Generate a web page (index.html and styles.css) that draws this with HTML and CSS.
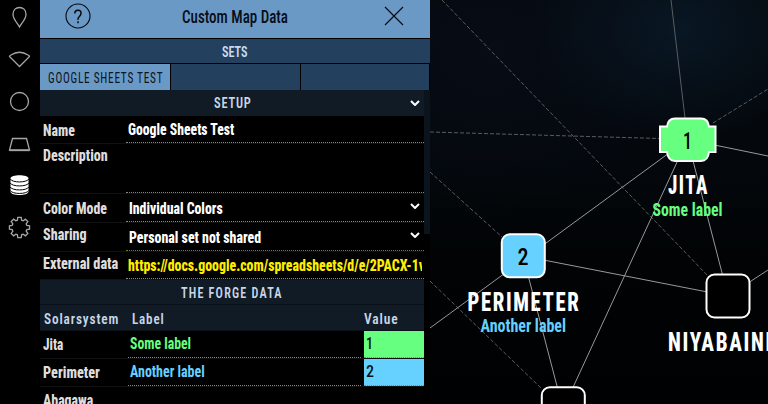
FILE: index.html
```html
<!DOCTYPE html>
<html lang="en">
<head>
<meta charset="utf-8">
<title>Custom Map Data</title>
<link rel="stylesheet" href="styles.css">
</head>
<body>
<div class="app">
  <nav class="rail">
    <svg viewBox="0 0 40 42"><path d="M19.5 31C18 28 13 23 13 18.5C13 14 16 11.5 19.5 11.5S26 14 26 18.5C26 23 21 28 19.5 31Z"/></svg>
    <svg viewBox="0 0 40 42"><path d="M19.5 28.5L9.5 18.5Q9.500 17.500 11 17Q19.500 11.500 28 17Q29.500 17.500 29.500 18.500Z"/></svg>
    <svg viewBox="0 0 40 42"><circle cx="19.500" cy="21.500" r="9"/></svg>
    <svg viewBox="0 0 40 42"><path d="M12.500 16.500H26.500L29.500 28H9.500Z"/><path d="M9.500 28.500H29.500"/></svg>
    <svg viewBox="0 0 40 42" class="active"><path class="solid" d="M10.500 14.500C10.500 10.200 28.500 10.200 28.500 14.500V27.500C28.500 32.200 10.500 32.200 10.500 27.500Z"/><path class="cut" d="M10 14.800C12 19 27 19 29 14.800M10 18.800C12 23 27 23 29 18.800M10 22.800C12 27 27 27 29 22.800M10 26.300C12 30.500 27 30.500 29 26.300"/></svg>
    <svg viewBox="0 0 40 42"><path id="gear" d=""/></svg>
  </nav>

  <main class="panel">
    <header class="titlebar">
      <svg class="help" viewBox="0 0 26 26"><circle cx="13" cy="13" r="12"/><path class="mark" d="M9.800 10.500Q9.800 7.200 13 7.200T16 10.300Q16 12 14.400 13.500T13 16.800M13 18.300V20.300"/></svg>
      <h1><span class="fit" data-w="106">Custom Map Data</span></h1>
      <svg class="close" viewBox="0 0 20 20"><path d="M1 1L19 19M19 1L1 19"/></svg>
    </header>
    <h2 class="sets"><span class="fit mid" data-w="26">SETS</span></h2>
    <div class="tabs">
      <div class="tab on"><span class="fit" data-w="115">GOOGLE SHEETS TEST</span></div>
      <div class="tab"></div>
      <div class="tab last"></div>
    </div>
    <div class="scroller">
      <div class="content">
        <h2 class="section setup"><span class="fit mid" data-w="38">SETUP</span><svg class="chev" viewBox="0 0 10 6"><path d="M1 1L5 5L9 1"/></svg></h2>
        <div class="row name"><div class="key"><span class="fit" data-w="32">Name</span></div><div class="val"><span class="fit" data-w="106">Google Sheets Test</span></div></div>
        <div class="row desc"><div class="key"><span class="fit" data-w="65">Description</span></div><div class="val"></div></div>
        <div class="row color"><div class="key"><span class="fit" data-w="64">Color Mode</span></div><div class="val select"><span class="fit" data-w="94">Individual Colors</span><svg class="chev" viewBox="0 0 10 6"><path d="M1 1L5 5L9 1"/></svg></div></div>
        <div class="row share"><div class="key"><span class="fit" data-w="44">Sharing</span></div><div class="val select warn"><span class="fit" data-w="132">Personal set not shared</span><svg class="chev" viewBox="0 0 10 6"><path d="M1 1L5 5L9 1"/></svg></div></div>
        <div class="row ext"><div class="key"><span class="fit" data-w="75">External data</span></div><div class="val"><div class="clip"><span class="fit" data-w="297">https://docs.google.com/spreadsheets/d/e/2PACX-1v</span></div></div></div>
        <h2 class="section forge"><span class="fit mid" data-w="102">THE FORGE DATA</span></h2>
        <div class="line head"><div><span class="fit" data-w="75">Solarsystem</span></div><div><span class="fit" data-w="33">Label</span></div><div><span class="fit" data-w="35">Value</span></div></div>
        <div class="line sys green"><div class="key"><span class="fit" data-w="20">Jita</span></div><div class="lab"><span class="fit" data-w="61">Some label</span></div><div class="num"><span class="fit" data-w="7">1</span></div></div>
        <div class="line sys blue"><div class="key"><span class="fit" data-w="57">Perimeter</span></div><div class="lab"><span class="fit" data-w="75">Another label</span></div><div class="num"><span class="fit" data-w="8">2</span></div></div>
        <div class="line sys"><div class="key"><span class="fit" data-w="50">Abagawa</span></div></div>
      </div>
      <div class="track"><div class="thumb"></div></div>
    </div>
  </main>

  <section class="map">
    <svg viewBox="430 0 338 404">
      <g class="far">
        <path d="M671 0L685 118"/>
        <path class="dash" d="M442 0L708 276M430 132L660 138.500M430 172L502 237M713 123L768 89M430 281L541 388"/>
      </g>
      <path class="near" d="M687.500 139.500L768 156M687.500 139.500L430 328M523 256L728 296L687.500 139.500L563 409L523 256M728 296L768 270"/>
      <g class="node">
        <path class="hub" d="M675 118.500H701Q708 118.500 709 126.500H715.500V152H709Q708 161 701 161H675Q668 161 667 152H660V126.500H667Q668 118.500 675 118.500Z"/>
        <rect class="peri" x="501.800" y="234.300" width="43" height="43" rx="8"/>
        <rect x="706.500" y="274.500" width="43" height="43" rx="8"/>
        <rect x="541.800" y="387.300" width="43" height="43" rx="8"/>
      </g>
      <text class="digit" x="683" y="149" textLength="9" lengthAdjust="spacingAndGlyphs">1</text>
      <text class="digit" x="517.500" y="265" textLength="11" lengthAdjust="spacingAndGlyphs">2</text>
      <text class="sysname" x="668" y="194" textLength="41" lengthAdjust="spacingAndGlyphs">JITA</text>
      <text class="sysname" x="467.500" y="311" textLength="113" lengthAdjust="spacingAndGlyphs">PERIMETER</text>
      <text class="sysname" x="668" y="351" textLength="124" lengthAdjust="spacingAndGlyphs">NIYABAINEN</text>
      <text class="tag g" x="652.500" y="216" textLength="70" lengthAdjust="spacingAndGlyphs">Some label</text>
      <text class="tag b" x="480.500" y="332" textLength="85.500" lengthAdjust="spacingAndGlyphs">Another label</text>
    </svg>
  </section>
</div>
<script src="fit.js"></script>
</body>
</html>
```
FILE: styles.css
```css
* { box-sizing: border-box; }
body { margin: 0; background: #000; overflow: hidden; font-family: Roboto, "Open Sans", sans-serif; font-stretch: 75%; }
h1, h2 { margin: 0; font-weight: 500; }
.app { display: grid; grid-template-columns: 40px 390px 338px; width: 768px; height: 404px; overflow: hidden; }
.fit { display: inline-block; white-space: nowrap; transform-origin: left center; }
.fit.mid { transform-origin: center; }

.rail { background: #000; margin-top: -4px; }
.rail svg { display: block; width: 40px; height: 42px; fill: none; stroke: #a6a6a6; stroke-width: 1.3; }
.rail .solid { fill: #fff; stroke: none; }
.rail .cut { stroke: #000; stroke-width: 1; }

.panel { display: flex; flex-direction: column; height: 404px; overflow: hidden; background: #000; }
.titlebar { height: 38px; flex: none; background: #6b99c6; display: grid; grid-template-columns: 142px 202px 46px; }
.titlebar svg { fill: none; stroke: #05080c; stroke-width: 1.1; }
.titlebar .mark { stroke-width: 1.5; }
.help { width: 26px; height: 26px; margin: 3px 0 0 24.500px; }
.close { width: 20px; height: 20px; margin: 6px 0 0 -0.500px; }
.titlebar h1 { font-size: 19px; line-height: 22px; padding-top: 6px; font-weight: 500; color: #080e16; }
.sets { flex: none; margin-top: 1px; height: 24px; background: #24405f; color: #c8dbee; text-align: center; font-size: 15px; line-height: 26px; font-weight: 600; }
.tabs { flex: none; margin-top: 1px; height: 26px; display: flex; gap: 1px; background: #000; padding-right: 1px; }
.tab { width: 129px; background: #24405f; }
.tab.last { width: 128px; }
.tab.on { width: 130px; background: #6b99c6; color: #0b1420; font-size: 15px; line-height: 28px; font-weight: 400; letter-spacing: 1px; padding-left: 8px; }
.scroller { flex: 1; display: flex; min-height: 0; }
.content { width: 384px; overflow: hidden; }
.track { width: 6px; }
.thumb { height: 144px; background: #0b131c; }

.section { background: #111b26; color: #c8d6e6; text-align: center; font-size: 15px; letter-spacing: 1px; font-weight: 600; }
.setup { height: 26px; line-height: 27px; display: grid; grid-template-columns: 1fr 15px; padding-left: 16px; justify-items: center; }
.setup .fit { justify-self: center; }
.chev { width: 10px; height: 6px; fill: none; stroke: #fff; stroke-width: 2; }
.setup .chev { margin: 10px 0 0 -4px; }
.row { display: grid; grid-template-columns: 86px 298px; border-bottom: 1px solid #111; font-size: 16px; line-height: 20px; font-weight: 800; color: #fff; }
.key { padding-left: 3px; color: #dedede; }
.val { padding-left: 2px; border-bottom: 1px dotted #858585; }
.select { padding-left: 3px; display: flex; justify-content: space-between; }
.warn { border-color: #857c00; }
.name { height: 28px; }
.name .key { padding-top: 5px; }
.name .val { padding-top: 4px; }
.desc { height: 50px; }
.desc .key { padding-top: 2px; }
.color { height: 29px; }
.color .key, .color .val { padding-top: 5px; }
.share { height: 29px; }
.share .key { padding-top: 2px; }
.share .val { padding-top: 5px; }
.select .chev { margin: 4px 4px 0 0; }
.ext { height: 28px; color: #ffee00; }
.ext .key { padding-top: 2px; }
.ext .val { padding-top: 4px; }
.clip { width: 294px; overflow: hidden; height: 22px; }
.forge { height: 25px; line-height: 26px; border-bottom: 1px solid #0a1017; letter-spacing: 1.500px; }
.line { display: grid; grid-template-columns: 90px 234px 60px; border-bottom: 1px solid #111; line-height: 20px; }
.head { height: 26px; background: #111b26; color: #c8d6e6; font-size: 15px; letter-spacing: 1px; font-weight: 600; padding-top: 4px; border-color: #0a1017; }
.head div { padding-left: 4px; }
.head div:nth-child(2) { padding-left: 2px; }
.head div:nth-child(3) { padding-left: 0; }
.sys { height: 28px; font-size: 16px; font-weight: 800; }
.sys .key { padding-top: 4px; }
.lab { margin: 0 3px 0 -2px; padding: 3px 0 0 2px; border-bottom: 1px dotted #858585; font-weight: 700; }
.num { padding: 3px 0 0 2px; color: #0a1418; border-bottom: 1px dotted #858585; font-weight: 500; }
.green .lab { color: #66ff80; }
.green .num { background: #66ff80; }
.blue .lab { color: #66d1ff; }
.blue .num { background: #66d1ff; }

.map { background: radial-gradient(ellipse 150px 110px at 250px 30px, #091724 0, transparent 100%), radial-gradient(ellipse 200px 160px at 60px 50px, #070c15 0, transparent 100%), linear-gradient(#04080d, #04080d 40%, #010304 65%, #000102); }
.map svg { display: block; width: 338px; height: 404px; fill: none; }
.far { stroke: #5a5c5e; stroke-width: 1; }
.dash { stroke-dasharray: 4 2; }
.near { stroke: #969899; stroke-width: 1; }
.node { stroke: #fff; stroke-width: 2; fill: #000; }
.hub { fill: #66ff80; }
.peri { fill: #66d1ff; }
.map text { font-family: Roboto, sans-serif; }
.digit { font-size: 24px; fill: #000; font-weight: 500; }
.sysname { font-size: 25px; font-weight: 800; fill: #fff; letter-spacing: 2px; }
.tag { font-size: 19px; font-weight: 700; }
.g { fill: #66ff80; }
.b { fill: #66d1ff; }
```
FILE: fit.js
```js
document.querySelectorAll('.fit').forEach(function (el) {
  el.style.transform = 'scaleX(' + el.dataset.w / el.offsetWidth + ')';
});

// Gear outline: eight rounded teeth around a circle.
var d = '';
for (var i = 0; i < 8; i++) {
  [[-0.28, 7.6], [-0.17, 10.2], [0.17, 10.2], [0.28, 7.6]].forEach(function (p, j) {
    var a = i * Math.PI / 4 + p[0];
    d += (i || j ? 'L' : 'M') + (19.5 + p[1] * Math.cos(a)).toFixed(2) + ' ' + (21.5 + p[1] * Math.sin(a)).toFixed(2);
  });
}
document.getElementById('gear').setAttribute('d', d + 'Z');
```
